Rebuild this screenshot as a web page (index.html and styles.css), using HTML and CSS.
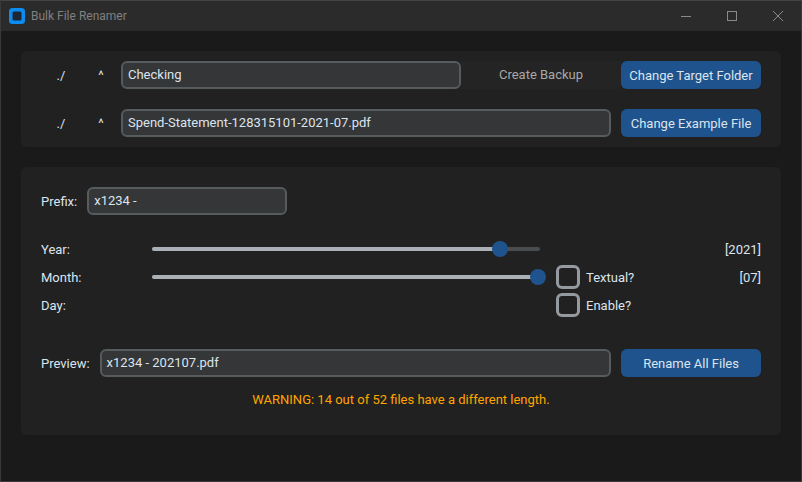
FILE: index.html
```html
<!DOCTYPE html>
<html lang="en">
<head>
<meta charset="utf-8">
<title>Bulk File Renamer</title>
<link rel="stylesheet" href="styles.css">
</head>
<body>
<div class="window">
  <header class="titlebar">
    <svg class="app-icon" width="16" height="16" viewBox="0 0 16 16"><rect width="16" height="16" rx="3.5" fill="#0a8cf0"/><rect x="3.5" y="3.5" width="9" height="9" rx="1.5" fill="#1c2733"/></svg>
    <span class="app-title">Bulk File Renamer</span>
    <div class="win-controls">
      <svg class="win-btn" width="46" height="30" viewBox="0 0 46 30"><path d="M18 15.5H28" stroke="#8a8a8a" fill="none"/></svg>
      <svg class="win-btn" width="46" height="30" viewBox="0 0 46 30"><rect x="18.5" y="10.5" width="9" height="9" stroke="#8a8a8a" fill="none"/></svg>
      <svg class="win-btn" width="46" height="30" viewBox="0 0 46 30"><path d="M18 10L28 20M28 10L18 20" stroke="#8a8a8a" fill="none"/></svg>
    </div>
  </header>
  <main class="content">
    <section class="panel top-panel">
      <div class="path-row">
        <span class="path-btn">./</span>
        <span class="path-btn">^</span>
        <div class="field field-folder">Checking</div>
        <div class="backup">Create Backup</div>
        <button class="btn">Change Target Folder</button>
      </div>
      <div class="path-row">
        <span class="path-btn">./</span>
        <span class="path-btn">^</span>
        <div class="field field-example">Spend-Statement-128315101-2021-07.pdf</div>
        <button class="btn btn-gap">Change Example File</button>
      </div>
    </section>
    <section class="panel main-panel">
      <div class="prefix-row">
        <span class="label">Prefix:</span>
        <div class="field field-prefix">x1234 -</div>
      </div>
      <div class="date-grid">
        <span class="label">Year:</span>
        <div class="slider"><div class="progress" style="width:348px"></div><div class="thumb" style="left:340px"></div></div>
        <span></span>
        <span class="label value">[2021]</span>

        <span class="label">Month:</span>
        <div class="slider"><div class="progress" style="width:386px"></div><div class="thumb" style="left:378px"></div></div>
        <label class="check"><span class="box"></span><span class="label">Textual?</span></label>
        <span class="label value">[07]</span>

        <span class="label">Day:</span>
        <span></span>
        <label class="check"><span class="box"></span><span class="label">Enable?</span></label>
        <span></span>
      </div>
      <div class="preview-row">
        <span class="label">Preview:</span>
        <div class="field field-preview">x1234 - 202107.pdf</div>
        <button class="btn">Rename All Files</button>
      </div>
      <p class="warning">WARNING: 14 out of 52 files have a different length.</p>
    </section>
  </main>
</div>
</body>
</html>
```
FILE: styles.css
```css
* { box-sizing: border-box; }
html, body { margin: 0; padding: 0; }
body {
  width: 802px;
  height: 482px;
  overflow: hidden;
  background: #1a1a1a;
  font-family: Roboto, "Liberation Sans", sans-serif;
  font-size: 13px;
  color: #dce4ee;
}
.window {
  width: 802px;
  height: 482px;
  border: 1px solid #3a3a3a;
  border-top-color: #444;
  background: #1a1a1a;
  display: flex;
  flex-direction: column;
}
.titlebar {
  height: 30px;
  flex: none;
  background: #2b2b2b;
  display: flex;
  align-items: center;
  padding-left: 8px;
}
.app-icon { flex: none; }
.app-title { margin-left: 6px; color: #808080; font-size: 12px; }
.win-controls { margin-left: auto; display: flex; }
.win-btn { display: block; }
.content {
  flex: 1;
  padding: 20px 20px 0;
  display: flex;
  flex-direction: column;
  gap: 20px;
}
.panel { width: 760px; background: #212121; border-radius: 6px; }
.top-panel {
  height: 96px;
  padding: 10px 20px;
  display: flex;
  flex-direction: column;
  gap: 20px;
}
.path-row { display: flex; height: 28px; align-items: center; }
.path-btn { width: 40px; text-align: center; color: #dce4ee; }
.field {
  height: 28px;
  line-height: 24px;
  padding: 0 5px;
  background: #343638;
  border: 2px solid #565b5e;
  border-radius: 6px;
  font-size: 13px;
  white-space: nowrap;
}
.field-folder { width: 340px; }
.field-example { width: 490px; }
.field-prefix { width: 200px; }
.field-preview { width: 512px; }
.backup {
  width: 160px;
  height: 28px;
  line-height: 28px;
  text-align: center;
  background: #242424;
  color: #a8a8a8;
}
.btn {
  width: 140px;
  height: 28px;
  padding: 0;
  border: 0;
  border-radius: 6px;
  background: #1f538d;
  color: #dce4ee;
  font: inherit;
}
.btn-gap { margin-left: 10px; }
.main-panel { height: 268px; padding: 20px; }
.prefix-row { display: flex; align-items: center; gap: 10px; height: 28px; }
.label { white-space: nowrap; }
.date-grid {
  margin-top: 20px;
  display: grid;
  grid-template-columns: 111px 404px 1fr auto;
  grid-auto-rows: 28px;
  align-items: center;
}
.value { text-align: right; }
.slider { position: relative; width: 388px; height: 4px; background: #4a4d50; border-radius: 2px; }
.progress { height: 4px; background: #aab0b5; border-radius: 2px; }
.thumb {
  position: absolute;
  top: -6px;
  width: 16px;
  height: 16px;
  border-radius: 50%;
  background: #1f538d;
}
.check { display: flex; align-items: center; gap: 6px; }
.box {
  width: 24px;
  height: 24px;
  border: 3px solid #949a9f;
  border-radius: 6px;
}
.preview-row { margin-top: 30px; display: flex; align-items: center; gap: 10px; height: 28px; }
.warning {
  margin: 13px 0 0;
  height: 20px;
  line-height: 20px;
  text-align: center;
  color: #ffa500;
}
```
